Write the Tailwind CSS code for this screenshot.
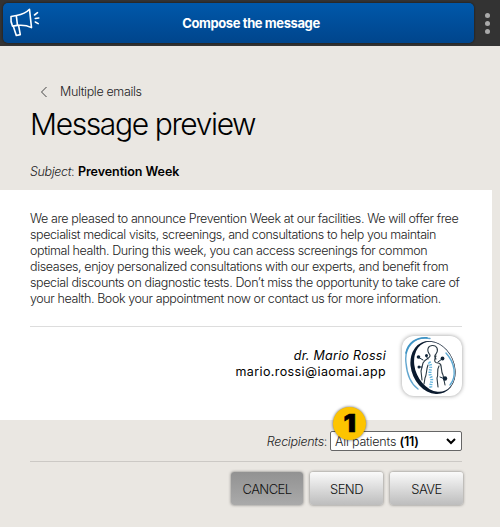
<!DOCTYPE html>
<html lang="en">
<head>
<meta charset="utf-8">
<title>Message preview</title>
<script src="https://cdn.jsdelivr.net/npm/@tailwindcss/browser@4"></script>
</head>
<body class="w-[500px] h-[527px] overflow-hidden bg-[#eae7e2] font-['Inter','Liberation_Sans',sans-serif] text-[12.5px] tracking-[-0.35px] leading-4 text-[#222] font-light">
<header class="flex h-[46px] bg-[#333] pt-[3px] pl-[3px]">
  <div class="relative flex w-[471px] h-10 items-center justify-center rounded-[5px] bg-linear-to-b from-[#0058aa] to-[#00458c] shadow-[0_0_2px_#111]">
    <svg class="absolute left-[6px] top-[5px]" width="32" height="30" viewBox="0 0 32 30" fill="none" stroke="#fff" stroke-width="1.6" stroke-linecap="round" stroke-linejoin="round">
      <path d="M2 8.500 7.500 7.500C13 6.500 17.500 4.500 20.500 1.300L22.500 19.600C18.500 17.600 14 16.900 8.500 17.400L3.500 18.100Q1.400 13.500 2 8.500Z"/>
      <path d="M7.300 7.700 8.500 17.300M4.300 18.200 7.300 27.500 11.300 26.600 9.600 17.600M25.500 7 28.500 4.700M26.300 10.500 29.800 10M26.300 14 29.200 15.600"/>
    </svg>
    <span class="text-white text-[13px] font-bold tracking-[-0.4px] whitespace-nowrap ml-[25px]">Compose the message</span>
  </div>
  <div class="flex flex-col gap-[3px] ml-[11px] pt-[10px]">
    <i class="size-[5px] rounded-full bg-[#aaa]"></i><i class="size-[5px] rounded-full bg-[#aaa]"></i><i class="size-[5px] rounded-full bg-[#aaa]"></i>
  </div>
</header>
<nav class="flex items-center h-4 mt-[38px] pl-10">
  <svg width="8" height="12" viewBox="0 0 8 12" fill="none" stroke="#444" stroke-width="1"><path d="M6.500 1 1.500 6 6.500 11"/></svg>
  <span class="ml-3 whitespace-nowrap">Multiple emails</span>
</nav>
<h1 class="mt-[6px] h-9 pl-[30px] text-[30px] leading-9 tracking-[-1.38px] text-black whitespace-nowrap">Message preview</h1>
<p class="mt-[22px] h-4 pl-[30px] whitespace-nowrap"><span class="italic">Subject</span>: <b class="ml-[0.5px] font-semibold text-black tracking-[-0.05px]">Prevention Week</b></p>
<main class="mt-[10px] h-[230px] w-[492px] bg-white pl-[30px] pt-[21px]">
  <div class="flex flex-col h-24 whitespace-nowrap tracking-[-0.4px]">
    <span>We are pleased to announce Prevention Week at our facilities. We will offer free</span>
    <span>specialist medical visits, screenings, and consultations to help you maintain</span>
    <span>optimal health. During this week, you can access screenings for common</span>
    <span>diseases, enjoy personalized consultations with our experts, and benefit from</span>
    <span class="tracking-[-0.37px]">special discounts on diagnostic tests. Don’t miss the opportunity to take care of</span>
    <span>your health. Book your appointment now or contact us for more information.</span>
  </div>
  <hr class="mt-[19px] w-[432px] border-0 h-px bg-[#ddd]">
  <div class="flex w-[432px] justify-end mt-[9px]">
    <div class="mr-4 mt-3 text-right text-black font-normal whitespace-nowrap"><div class="italic tracking-[0.27px]">dr. Mario Rossi</div><div class="tracking-[0.4px]">mario.rossi@iaomai.app</div></div>
    <div class="size-[60px] rounded-[12px] bg-white shadow-[0_0_4px_rgba(0,0,0,.4)]">
      <svg width="60" height="60" viewBox="0 0 60 60" fill="none" stroke-linecap="round">
        <path d="M28 2.500C12 0 2 11 4 27 5 39 9 48 16 53" stroke="#62a6cf" stroke-width="1.400"/>
        <path d="M25 1.800C14 1 6 7 4 17" stroke="#3d93c4" stroke-width="1.600"/>
        <!-- ring: outer ellipse minus an inner one shifted to the right -->
        <g transform="rotate(-24 31 31.500)">
          <path fill="#0a1a2e" fill-rule="evenodd" d="M9.500 31.500A21.500 27.500 0 1 0 52.500 31.500A21.500 27.500 0 1 0 9.500 31.500ZM13.500 31.500A19.200 26 0 1 1 51.900 31.500A19.200 26 0 1 1 13.500 31.500Z"/>
        </g>
        <path d="M44 17C53 27 55 40 48 49" stroke="#5ca8d2" stroke-width="1.400"/>
        <path d="M28 19C24 14 26 10 30 9.500 35 9 37 14 34 18 32 20 33 22 34 23M28 19C29 23 23 22 21 27L19 35 20 44M26 29C24 34 25 38 23 42L22 48M34 20C32 24 32 27 36 27 41 27 38 34 41 39L43 49M37 30C34 35 37 38 35 42L36 51" stroke="#2b3a44" stroke-width="1.100"/>
        <path d="M27 26C31 31 26 36 29 41 31 45 28 48 29 52" stroke="#62b4dd" stroke-width="3" stroke-dasharray="1.300 1.200" stroke-linecap="butt"/>
        <path d="M16 21 21 24M24 20 26 23M17 31 20 31M40 23 36 26M43 43 38 41" stroke="#172d40"/>
        <g fill="#102438"><circle cx="16.500" cy="21" r="1.800"/><circle cx="24.500" cy="19.500" r="1.500"/><circle cx="17" cy="31" r="1.500"/><circle cx="40.500" cy="22.500" r="1.900"/><circle cx="43" cy="42.500" r="2.200"/></g>
      </svg>
    </div>
  </div>
</main>
<div class="flex items-center mt-[11px] h-5 w-[462px] justify-end">
  <span class="mr-[3px] pt-px whitespace-nowrap"><span class="italic tracking-[-0.28px]">Recipients</span>:</span>
  <div class="relative flex items-center w-[132px] h-5 rounded-[2px] border border-[#666] bg-white pl-1 whitespace-nowrap">
    <span class="tracking-[-0.2px] pt-px">All patients <b class="font-semibold text-black">(11)</b></span>
    <svg class="absolute right-[5px] top-[6px]" width="10" height="7" viewBox="0 0 10 7" fill="none" stroke="#000" stroke-width="2"><path d="M1 1 5 5 9 1"/></svg>
    <div class="absolute left-[2px] -top-[25px] size-[33px] rounded-full bg-[#fdc400] shadow-[0_0_3px_rgba(0,0,0,.65)] flex items-center justify-center text-[25px] leading-none font-black text-black"><span class="scale-x-110 pr-px [-webkit-text-stroke:0.6px_#000]">1</span></div>
  </div>
</div>
<hr class="mt-[10px] ml-[30px] w-[432px] border-0 h-px bg-[#ccc9c5]">
<div class="flex gap-[7px] mt-[10px] w-[463px] justify-end text-[13px] tracking-[-0.55px] text-[#111]">
  <div class="flex items-center justify-center w-[72px] h-[33px] rounded-[3px] bg-linear-to-b from-[#929292] to-[#aaa] shadow-[0_0_3px_rgba(0,0,0,.5)]">CANCEL</div>
  <div class="flex items-center justify-center w-[73px] h-[33px] rounded-[3px] bg-linear-to-b from-[#fafafa] to-[#bdbdbd] shadow-[0_0_3px_rgba(0,0,0,.5)]">SEND</div>
  <div class="flex items-center justify-center w-[73px] h-[33px] rounded-[3px] bg-linear-to-b from-[#fafafa] to-[#bdbdbd] shadow-[0_0_3px_rgba(0,0,0,.5)]">SAVE</div>
</div>
</body>
</html>
